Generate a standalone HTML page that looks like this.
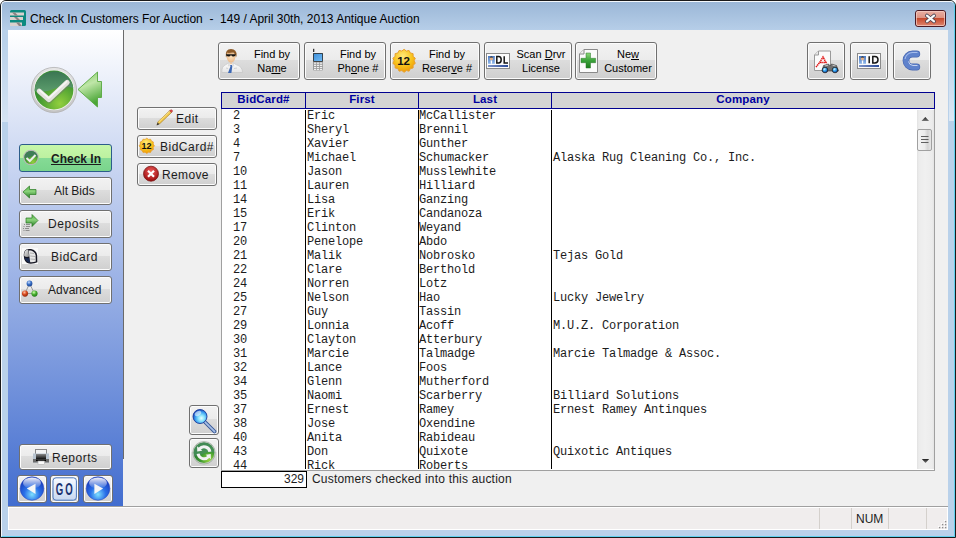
<!DOCTYPE html>
<html><head><meta charset="utf-8">
<style>
*{box-sizing:border-box;margin:0;padding:0}
html,body{width:956px;height:538px;overflow:hidden;background:#fff}
body{position:relative;font-family:"Liberation Sans",sans-serif;color:#000}
.a{position:absolute}
#win{position:absolute;left:0;top:0;width:956px;height:538px;background:#b9d1ea;border:1px solid #1a1a1a;border-radius:6px 6px 0 0}
#win:before{content:"";position:absolute;left:0;top:0;right:0;bottom:0;border:1px solid #f4f8fc;border-right-color:#5fd0ee;border-bottom-color:#5fd0ee;border-radius:5px 5px 0 0}
#titlebg{position:absolute;left:2px;top:2px;width:952px;height:28px;background:linear-gradient(#9bb7d7,#b6cee8);border-radius:4px 4px 0 0}
#title{left:30px;top:11px;font-size:12px;white-space:pre;color:#000;line-height:16px}
#client{left:8px;top:30px;width:940px;height:500px;background:#f0f0f0;overflow:hidden}
#side{left:8px;top:30px;width:115px;height:476px;background:linear-gradient(#ffffff,#426dcf)}
#sep{left:123px;top:30px;width:1px;height:429px;background:#6a6a6a}
#status{left:8px;top:506px;width:940px;height:24px;background:#f0eded;border-top:1px solid #a0a0a0}
#status:after{content:"";position:absolute;left:0;top:0;right:0;bottom:0;border-top:1px solid #fff;border-bottom:1px solid #fff;border-left:1px solid #fff;border-right:1px solid #fff}
.sbsep{top:508px;width:1px;height:21px;background:#d4d0cc}
.btn{position:absolute;border:1px solid #707070;border-radius:3px;background:linear-gradient(#f2f2f2 0%,#ebebeb 47%,#dddddd 47%,#cfcfcf 100%);box-shadow:inset 0 0 0 1px #fcfcfc}
.bt{position:absolute;font-size:11px;line-height:13px;text-align:center;white-space:pre;color:#000}
.st{position:absolute;font-size:12px;line-height:14px;white-space:pre;color:#1c1c1c}
#grid{left:221px;top:92px;width:714px;height:379px;background:#fff;border:1px solid #a0a0a0;border-top:0}
#ghead{left:221px;top:92px;width:714px;height:17px;background:#d4d4d4;border:1px solid #000090}
.gh{position:absolute;top:0;height:15px;font-size:11.5px;letter-spacing:0.15px;font-weight:bold;color:#0000a0;text-align:center;line-height:15px}
.gv{position:absolute;width:1px;background:#000090}
.gd{position:absolute;width:1px;background:#000}
.gc{position:absolute;top:0;font-family:"Liberation Mono",monospace;font-size:12.0px;letter-spacing:-0.2px;line-height:14px;white-space:pre;color:#1c1c1c}
.row{position:absolute;left:0;height:14px;font-family:"Liberation Mono",monospace;font-size:11.667px;line-height:14px;white-space:pre;color:#1c1c1c}
</style></head><body>
<div id="win"></div>
<div id="titlebg"></div>
<div class="a" id="title">Check In Customers For Auction  -  149 / April 30th, 2013 Antique Auction</div>
<div class="a" id="client"></div>
<div class="a" style="left:949px;top:40px;width:5px;height:81px;background:linear-gradient(rgba(255,255,255,0),rgba(255,255,255,0.5))"></div>
<div class="a" style="left:2px;top:40px;width:6px;height:82px;background:linear-gradient(rgba(255,255,255,0),rgba(255,255,255,0.4))"></div>
<div class="a" id="side"></div>
<div class="a" id="sep"></div>
<div class="a" id="status"></div>
<div class="a sbsep" style="left:819px"></div>
<div class="a sbsep" style="left:851px"></div>
<div class="a sbsep" style="left:888px"></div>
<div class="a sbsep" style="left:926px"></div>
<div class="st" style="left:856px;top:512px">NUM</div>
<svg class="a" style="left:936px;top:518px" width="12" height="12" viewBox="936 518 12 12"><g fill="#fff"><rect x="944" y="520" width="1" height="1"/><rect x="941" y="523" width="1" height="1"/><rect x="944" y="523" width="1" height="1"/><rect x="938" y="526" width="1" height="1"/><rect x="941" y="526" width="1" height="1"/><rect x="944" y="526" width="1" height="1"/></g><g fill="#8e8e8e"><rect x="945" y="521" width="1.3" height="1.3"/><rect x="942" y="524" width="1.3" height="1.3"/><rect x="945" y="524" width="1.3" height="1.3"/><rect x="939" y="527" width="1.3" height="1.3"/><rect x="942" y="527" width="1.3" height="1.3"/><rect x="945" y="527" width="1.3" height="1.3"/></g></svg>

<!-- toolbar -->
<div class="btn" style="left:218px;top:42px;width:82px;height:38px"></div>
<div class="btn" style="left:304px;top:42px;width:82px;height:38px"></div>
<div class="btn" style="left:390px;top:42px;width:90px;height:38px"></div>
<div class="btn" style="left:484px;top:42px;width:88px;height:38px"></div>
<div class="btn" style="left:575px;top:42px;width:82px;height:38px"></div>
<div class="btn" style="left:807px;top:42px;width:38px;height:38px"></div>
<div class="btn" style="left:850px;top:42px;width:38px;height:38px"></div>
<div class="btn" style="left:893px;top:42px;width:38px;height:38px"></div>

<!-- toolbar text -->
<div class="bt" style="left:246px;top:48px;width:52px">Find by</div>
<div class="bt" style="left:246px;top:62px;width:52px">Na<u>m</u>e</div>
<div class="bt" style="left:332px;top:48px;width:52px">Find by</div>
<div class="bt" style="left:332px;top:62px;width:52px">Ph<u>o</u>ne #</div>
<div class="bt" style="left:417px;top:48px;width:60px">Find by</div>
<div class="bt" style="left:417px;top:62px;width:60px">Reser<u>v</u>e #</div>
<div class="bt" style="left:511px;top:48px;width:60px">Scan <u>D</u>rvr</div>
<div class="bt" style="left:511px;top:62px;width:60px">License</div>
<div class="bt" style="left:598px;top:48px;width:60px">Ne<u>w</u></div>
<div class="bt" style="left:598px;top:62px;width:60px">Customer</div>
<!-- left action buttons -->
<div class="btn" style="left:137px;top:107px;width:80px;height:23px"></div>
<div class="btn" style="left:137px;top:135px;width:80px;height:23px"></div>
<div class="btn" style="left:137px;top:163px;width:80px;height:23px"></div>
<div class="st" style="left:176px;top:112px;letter-spacing:0.5px">Edit</div>
<div class="st" style="left:160px;top:140px;letter-spacing:0.5px">BidCard#</div>
<div class="st" style="left:162px;top:168px;letter-spacing:0.35px">Remove</div>

<div class="btn" style="left:189px;top:405px;width:30px;height:30px"></div>
<div class="btn" style="left:189px;top:438px;width:30px;height:30px"></div>

<!-- sidebar buttons -->
<div class="a" style="left:19px;top:144px;width:93px;height:28px;border:1px solid #2c5d8a;border-radius:3px;background:linear-gradient(#c6f7aa 0%,#bdf1a0 50%,#85db95 50%,#7ad48c 100%)"></div>
<div class="btn" style="left:19px;top:177px;width:93px;height:28px"></div>
<div class="btn" style="left:19px;top:210px;width:93px;height:28px"></div>
<div class="btn" style="left:19px;top:243px;width:93px;height:28px"></div>
<div class="btn" style="left:19px;top:276px;width:93px;height:28px"></div>
<div class="btn" style="left:19px;top:444px;width:93px;height:26px"></div>
<div class="btn" style="left:17px;top:475px;width:30px;height:28px"></div>
<div class="btn" style="left:50px;top:475px;width:29px;height:28px"></div>
<div class="btn" style="left:83px;top:475px;width:30px;height:28px"></div>

<div class="st" style="left:51px;top:152px;font-weight:bold;text-decoration:underline">Check In</div>
<div class="st" style="left:54px;top:184px">Alt Bids</div>
<div class="st" style="left:48px;top:217px;letter-spacing:0.6px">Deposits</div>
<div class="st" style="left:51px;top:250px;letter-spacing:0.5px">BidCard</div>
<div class="st" style="left:48px;top:283px">Advanced</div>
<div class="st" style="left:52px;top:451px;letter-spacing:0.5px">Reports</div>

<!-- grid -->
<div class="a" id="grid"></div>
<div class="a" id="ghead"></div>
<div class="a" id="gbody" style="left:222px;top:109px;width:695px;height:360px;overflow:hidden">
<div class="gc" style="left:11px">2
3
4
7
10
11
14
15
17
20
21
22
24
25
27
29
30
31
32
34
35
37
38
40
43
44</div>
<div class="gc" style="left:85px">Eric
Sheryl
Xavier
Michael
Jason
Lauren
Lisa
Erik
Clinton
Penelope
Malik
Clare
Norren
Nelson
Guy
Lonnia
Clayton
Marcie
Lance
Glenn
Naomi
Ernest
Jose
Anita
Don
Rick</div>
<div class="gc" style="left:197px">McCallister
Brennil
Gunther
Schumacker
Musslewhite
Hilliard
Ganzing
Candanoza
Weyand
Abdo
Nobrosko
Berthold
Lotz
Hao
Tassin
Acoff
Atterbury
Talmadge
Foos
Mutherford
Scarberry
Ramey
Oxendine
Rabideau
Quixote
Roberts</div>
<div class="gc" style="left:331px">


Alaska Rug Cleaning Co., Inc.






Tejas Gold


Lucky Jewelry

M.U.Z. Corporation

Marcie Talmadge &amp; Assoc.


Billiard Solutions
Ernest Ramey Antinques


Quixotic Antiques
</div>

</div>
<div class="gd" style="left:305px;top:110px;height:359px"></div>
<div class="gd" style="left:418px;top:110px;height:359px"></div>
<div class="gd" style="left:551px;top:110px;height:359px"></div>
<div class="gv" style="left:305px;top:92px;height:17px"></div>
<div class="gv" style="left:418px;top:92px;height:17px"></div>
<div class="gv" style="left:551px;top:92px;height:17px"></div>
<div class="gh" style="left:222px;top:92px;width:83px">BidCard#</div>
<div class="gh" style="left:306px;top:92px;width:112px">First</div>
<div class="gh" style="left:419px;top:92px;width:132px">Last</div>
<div class="gh" style="left:552px;top:92px;width:382px">Company</div>
<!-- scrollbar -->
<div class="a" id="sb" style="left:917px;top:110px;width:17px;height:359px;background:linear-gradient(90deg,#e2e2e2 0px,#ececec 2px,#f0f0f0 8px,#ececec 15px,#e4e4e4 17px)"></div>
<div class="a" style="left:917px;top:129px;width:15px;height:22px;border:1px solid #a0a0a0;border-radius:2px;background:linear-gradient(90deg,#f4f4f4,#ececec 50%,#d4d4d4 75%,#e6e6e6)"></div>
<svg class="a" style="left:917px;top:110px" width="17" height="359" viewBox="0 0 17 359">
<defs><linearGradient id="gArr" x1="0" y1="0" x2="0" y2="1"><stop offset="0" stop-color="#202020"/><stop offset="1" stop-color="#7a7a7a"/></linearGradient></defs>
<path d="M4.5,11 L8.3,7 L12.1,11 Z" fill="url(#gArr)"/>
<path d="M4.8,349 L12.2,349 L8.5,353 Z" fill="url(#gArr)"/>
<path d="M4,26.5h7.5M4,29.5h7.5M4,32.5h7.5" stroke="#606060" stroke-width="1.2"/>
</svg>

<!-- count -->
<div class="a" style="left:221px;top:471px;width:86px;height:17px;border:1px solid #000;background:#fff"></div>
<div class="st" style="left:226px;top:472px;width:78px;text-align:right">329</div>
<div class="st" style="left:312px;top:472px;letter-spacing:0.2px">Customers checked into this auction</div>
<!-- ICONS -->
<svg class="a" style="left:0;top:0" width="956" height="538" viewBox="0 0 956 538">
<defs>
<linearGradient id="gGreen" x1="0" y1="0" x2="0" y2="1"><stop offset="0" stop-color="#3f7a57"/><stop offset="0.45" stop-color="#4f9060"/><stop offset="0.5" stop-color="#3d9a35"/><stop offset="1" stop-color="#8ccc40"/></linearGradient>
<radialGradient id="gGreen2" cx="0.65" cy="0.85" r="0.6"><stop offset="0" stop-color="#92cf3e"/><stop offset="1" stop-color="#3a932f"/></radialGradient>
<linearGradient id="gRing" x1="0" y1="0" x2="0" y2="1"><stop offset="0" stop-color="#e6e6e6"/><stop offset="1" stop-color="#c4c4c4"/></linearGradient>
<linearGradient id="gArrow" x1="0" y1="0" x2="0" y2="1"><stop offset="0" stop-color="#8fd070"/><stop offset="0.5" stop-color="#b8e2a0"/><stop offset="1" stop-color="#4ea83a"/></linearGradient>
<linearGradient id="gArrow2" x1="0" y1="0" x2="0" y2="1"><stop offset="0" stop-color="#5ab84a"/><stop offset="0.45" stop-color="#8ad27a"/><stop offset="1" stop-color="#227a22"/></linearGradient>
<radialGradient id="gBadge" cx="0.45" cy="0.3" r="0.7"><stop offset="0" stop-color="#ffe97a"/><stop offset="0.6" stop-color="#f7c21a"/><stop offset="1" stop-color="#ee9a08"/></radialGradient>
<linearGradient id="gBlueScr" x1="0" y1="0" x2="1" y2="1"><stop offset="0" stop-color="#3f8fd8"/><stop offset="1" stop-color="#6fbaf5"/></linearGradient>
<linearGradient id="gPlus" x1="0" y1="0" x2="0" y2="1"><stop offset="0" stop-color="#8fd87a"/><stop offset="0.5" stop-color="#3aa33a"/><stop offset="1" stop-color="#1d7a1d"/></linearGradient>
<linearGradient id="gC" x1="0" y1="0" x2="0" y2="1"><stop offset="0" stop-color="#7f9fdc"/><stop offset="1" stop-color="#4a6dbd"/></linearGradient>
<linearGradient id="gBar" x1="0" y1="0" x2="1" y2="0"><stop offset="0" stop-color="#7f95c8"/><stop offset="1" stop-color="#2a4a9a"/></linearGradient>
<linearGradient id="gPhoto" x1="0" y1="0" x2="0" y2="1"><stop offset="0" stop-color="#4a78c0"/><stop offset="1" stop-color="#8fb8ec"/></linearGradient>
<radialGradient id="gLens" cx="0.4" cy="0.35" r="0.6"><stop offset="0" stop-color="#d8f4ff"/><stop offset="0.5" stop-color="#38a8f0"/><stop offset="1" stop-color="#1050b0"/></radialGradient>
<radialGradient id="gRed" cx="0.5" cy="0.35" r="0.6"><stop offset="0" stop-color="#f06060"/><stop offset="1" stop-color="#a01010"/></radialGradient>
<radialGradient id="gNav" cx="0.5" cy="0.75" r="0.65"><stop offset="0" stop-color="#7fe0ff"/><stop offset="0.5" stop-color="#2a70e8"/><stop offset="1" stop-color="#1a3fc0"/></radialGradient>
<linearGradient id="gNavTop" x1="0" y1="0" x2="0" y2="1"><stop offset="0" stop-color="#ffffff" stop-opacity="0.95"/><stop offset="1" stop-color="#ffffff" stop-opacity="0.05"/></linearGradient>
<radialGradient id="gRef" cx="0.6" cy="0.8" r="0.7"><stop offset="0" stop-color="#8ccf3a"/><stop offset="0.6" stop-color="#4a9a3a"/><stop offset="1" stop-color="#2f7a3a"/></radialGradient>
<linearGradient id="gPrn" x1="0" y1="0" x2="0" y2="1"><stop offset="0" stop-color="#8a8a8a"/><stop offset="1" stop-color="#101010"/></linearGradient>
</defs>

<!-- app icon -->
<g>
<rect x="10" y="10" width="16" height="16" rx="1.5" fill="#0c8a80"/>
<rect x="10" y="12.5" width="14" height="3" fill="#d9d2ce"/>
<polygon points="12,12.5 15,12.5 18,15.5 15,15.5" fill="#8a8282"/>
<rect x="10" y="17" width="13" height="3" fill="#d9d2ce"/>
<polygon points="14,17 17,17 20,20 17,20" fill="#8a8282"/>
<rect x="10" y="22.5" width="12" height="3.5" fill="#d9d2ce"/>
<polygon points="16,22.5 19,22.5 22,26 19,26" fill="#8a8282"/>
</g>

<!-- close button -->
<g>
<defs><linearGradient id="gClose" x1="0" y1="0" x2="0" y2="1"><stop offset="0" stop-color="#eab0a4"/><stop offset="0.45" stop-color="#de9484"/><stop offset="0.5" stop-color="#c64a2e"/><stop offset="1" stop-color="#e08a74"/></linearGradient></defs>
<rect x="915.5" y="10.5" width="30" height="16" rx="2.5" fill="url(#gClose)" stroke="#4a1a24"/>
<rect x="916.5" y="11.5" width="28" height="14" rx="1.5" fill="none" stroke="#f6d0c8" stroke-opacity="0.7"/>
<path d="M927,15.6 L934,21.4 M934,15.6 L927,21.4" stroke="#3a3848" stroke-width="3.8" stroke-linecap="round"/>
<path d="M927,15.6 L934,21.4 M934,15.6 L927,21.4" stroke="#f8f8f8" stroke-width="2.3" stroke-linecap="round"/>
</g>

<!-- big check -->
<g>
<defs>
<linearGradient id="gTopG" x1="0" y1="0" x2="0" y2="1"><stop offset="0" stop-color="#3a7652"/><stop offset="1" stop-color="#5c9c6c"/></linearGradient>
<linearGradient id="gArrowB" x1="0" y1="0" x2="0.3" y2="1"><stop offset="0" stop-color="#7cc860"/><stop offset="0.45" stop-color="#bfe6a8"/><stop offset="1" stop-color="#4aa636"/></linearGradient>
</defs>
<circle cx="54" cy="90" r="22.6" fill="url(#gRing)" stroke="#b0b0b0" stroke-width="0.8"/>
<circle cx="54" cy="90" r="20.3" fill="#f2f2f2"/>
<circle cx="54" cy="90" r="19.4" fill="url(#gGreen2)"/>
<path d="M34.7,91 A19.4,19.4 0 0 1 73.3,88 Q64,84.5 55,88.5 Q44,93.5 34.7,91 Z" fill="url(#gTopG)"/>
<path d="M40,92.6 L49.2,100.6 L67.8,83.6" fill="none" stroke="#6a7a6a" stroke-width="5.6" stroke-linejoin="round" stroke-linecap="round" opacity="0.45"/>
<path d="M39.2,91.2 L48.8,99.6 L67.2,82.4" fill="none" stroke="#e4e2de" stroke-width="5" stroke-linejoin="round" stroke-linecap="round"/>
<path d="M39.6,90.2 L48.8,98.2 L66.6,81.6" fill="none" stroke="#f8f8f6" stroke-width="1.6" stroke-linejoin="round" stroke-linecap="round" opacity="0.9"/>
</g>
<!-- big arrow -->
<path d="M78,89.5 L97.5,72 L97.5,81.5 L101.5,81.5 L101.5,97.5 L97.5,97.5 L97.5,107 Z" fill="url(#gArrowB)" stroke="#58a840" stroke-width="0.9"/>

<!-- sidebar small icons -->
<g>
<circle cx="31" cy="157.5" r="7.8" fill="#b8b8b8"/>
<circle cx="31" cy="157.5" r="6.6" fill="url(#gGreen2)"/>
<path d="M24.4,157.5 A6.6,6.6 0 0 1 37.6,157.5 Q33,155 30,157 Q27,158.5 24.4,157.5Z" fill="#3f7d58"/>
<path d="M26.5,158 L29.8,161 L35.5,155" fill="none" stroke="#eeeeee" stroke-width="2"/>
</g>
<path d="M23,192 L29.5,186 L29.5,189.5 L36,189.5 L36,194.5 L29.5,194.5 L29.5,198 Z" fill="url(#gArrow2)" stroke="#2a7a22" stroke-width="0.7"/>
<g>
<path d="M26,218 L32,218 L32,214.5 L38,220.5 L32,226.5 L32,223 L26,223 Z" fill="url(#gArrow2)" stroke="#2a7a22" stroke-width="0.7"/>
<g stroke="#7a7a7a" stroke-width="0.8"><path d="M24,224.5h1M26,224.5h4M23.5,226.5h1M26,226.5h4M23,228.5h1M25,228.5h4M23.5,230.5h1M25.5,230.5h4"/></g>
</g>
<g>
<defs><linearGradient id="gSilv" x1="0" y1="0" x2="1" y2="1"><stop offset="0" stop-color="#f4f4f4"/><stop offset="1" stop-color="#8a8a8a"/></linearGradient></defs>
<rect x="22" y="248" width="16" height="16" fill="#fafafa"/>
<path d="M23.8,256 Q23.2,249.5 28.5,249 L31,249 Q36.5,250 37.2,255.5 L37.4,262.2 Q34,264 29,263.6 Q24,262.5 23.8,256Z" fill="#161622"/>
<path d="M24.2,256 Q23.8,250 28.2,249.6 L29.2,256.5 Q26.5,257.5 24.2,256 Z" fill="url(#gSilv)"/>
<path d="M24.6,257.5 Q26,258.5 29.5,258 L30,262.8 Q26,262.5 24.6,257.5Z" fill="#1a2a50"/>
<path d="M28.8,250.6 L31,250.6 Q34.8,251.6 35.6,255.2 L35.8,261.6 Q33,262.6 30.2,262.2 L29.4,256.6 Z" fill="#e6e6e6"/>
<path d="M30,253 L34,253.5 M30.2,256 L35,256.5 M30.4,259 L35.2,259.4" stroke="#9a9a9a" stroke-width="0.7"/>
</g>
<g>
<path d="M29.5,283.5 L25,293.5 L34.5,293.5 Z" fill="none" stroke="#9a9a9a" stroke-width="1"/>
<defs>
<radialGradient id="bB" cx="0.4" cy="0.3" r="0.7"><stop offset="0" stop-color="#c8dcff"/><stop offset="0.5" stop-color="#3a72c8"/><stop offset="1" stop-color="#1a4290"/></radialGradient>
<radialGradient id="bR" cx="0.4" cy="0.3" r="0.7"><stop offset="0" stop-color="#ffc0a0"/><stop offset="0.5" stop-color="#d84a20"/><stop offset="1" stop-color="#902a10"/></radialGradient>
<radialGradient id="bG" cx="0.4" cy="0.3" r="0.7"><stop offset="0" stop-color="#d0ffb0"/><stop offset="0.5" stop-color="#48b030"/><stop offset="1" stop-color="#247818"/></radialGradient>
</defs>
<circle cx="29.5" cy="283.5" r="2.9" fill="url(#bB)"/>
<circle cx="25" cy="293.6" r="3.1" fill="url(#bR)"/>
<circle cx="34.5" cy="293.6" r="3.1" fill="url(#bG)"/>
</g>
<!-- printer reports -->
<g>
<rect x="35.5" y="449.5" width="11" height="5" fill="#f4f4f4" stroke="#8a8a8a"/>
<rect x="33" y="453.5" width="16" height="9" fill="#b8c4d0"/>
<rect x="36" y="454" width="10" height="5" fill="url(#gPrn)"/>
<rect x="33" y="459" width="16" height="3.5" fill="#6a6a6a"/>
<rect x="36" y="459.5" width="10" height="1.5" fill="#000"/>
<rect x="38" y="461" width="6.5" height="3.5" fill="#fafafa" stroke="#b0b0b0" stroke-width="0.6"/>
</g>

<!-- nav -->
<g>
<circle cx="32" cy="488.5" r="11.8" fill="url(#gNav)" stroke="#2a4ac0" stroke-width="0.6"/>
<ellipse cx="32" cy="483" rx="9" ry="5.5" fill="url(#gNavTop)"/>
<path d="M26.8,488.5 L35.5,483.7 L35.5,494 Z" fill="#f6f6f6"/>
<circle cx="98" cy="488.5" r="11.8" fill="url(#gNav)" stroke="#2a4ac0" stroke-width="0.6"/>
<ellipse cx="98" cy="483" rx="9" ry="5.5" fill="url(#gNavTop)"/>
<path d="M103.1,488.5 L94.4,483.7 L94.4,494 Z" fill="#f6f6f6"/>
<defs><linearGradient id="gGo" x1="0" y1="0" x2="0" y2="1"><stop offset="0" stop-color="#f8fbff"/><stop offset="1" stop-color="#c8d8f0"/></linearGradient></defs>
<rect x="53" y="477.8" width="23.4" height="22.4" rx="3" fill="url(#gGo)" stroke="#4a78c0" stroke-width="1"/>
<text x="0" y="0" text-anchor="middle" font-family="Liberation Sans" font-weight="bold" font-size="16" fill="#1a3270" transform="translate(65.2 494.6) scale(0.6 1.08)" letter-spacing="3.5">GO</text>
</g>

<!-- toolbar icons -->
<!-- person -->
<g>
<defs><linearGradient id="gShirt" x1="0" y1="0" x2="0" y2="1"><stop offset="0" stop-color="#ffffff"/><stop offset="1" stop-color="#e4e4e4"/></linearGradient>
<radialGradient id="gFace" cx="0.5" cy="0.4" r="0.6"><stop offset="0" stop-color="#fde3c0"/><stop offset="1" stop-color="#eab888"/></radialGradient></defs>
<path d="M221.8,72.5 Q221.5,66.5 225.5,64.8 L229.5,62.6 L232.5,62.6 L236.5,64.8 Q242.5,66.5 242.6,72.5 Z" fill="url(#gShirt)" stroke="#c4c4c4" stroke-width="0.7"/>
<path d="M226,68 L228,68.5 M234,68.5 L237,68" stroke="#c8c8c8" stroke-width="0.8"/>
<path d="M229.2,62.8 L231,64.6 L232.8,62.8 Z" fill="#eec49a"/>
<path d="M229,62.8 L230.2,65.6 L228.2,66 Z M233,62.8 L231.8,65.6 L233.8,66 Z" fill="#f4f4f4" stroke="#c8c8c8" stroke-width="0.5"/>
<path d="M230.2,65 L231.8,65 L232.3,66.5 L231.4,73 L228,73 L230.4,66.5 Z" fill="#3d68b4"/>
<path d="M226.4,53 Q226.2,62.5 231,62.6 Q235.8,62.5 235.8,53 Z" fill="url(#gFace)"/>
<path d="M225.8,56.5 Q225,49.2 231,49 Q236.8,49 236.6,55.5 L236,57.6 Q235.4,53.6 233.2,52.6 Q230,53.4 227,52.8 Q226.4,54.5 226.4,57.5 Z" fill="#8c5a28"/>
<path d="M227,52.8 Q230,53.4 233.2,52.6" stroke="#b07a40" stroke-width="0.6" fill="none"/>
<path d="M226,54.2 H235.6 V55 Q235.4,56.4 233.6,56.4 Q231.6,56.4 231.2,55.2 L230.8,55.2 Q230.4,56.4 228.4,56.4 Q226.2,56.4 226,55 Z" fill="#141414"/>
</g>
<!-- phone -->
<g>
<rect x="313" y="48.8" width="1.3" height="3.2" fill="#333"/>
<rect x="313" y="53" width="10" height="17.5" rx="1" fill="#9a9a9a"/>
<rect x="313" y="53" width="10" height="8.8" rx="1" fill="#2a2a2a"/>
<rect x="313.8" y="53.8" width="8.4" height="7.2" fill="url(#gBlueScr)"/>
<g fill="#f0f0f0"><rect x="314" y="62.5" width="2.2" height="1.3"/><rect x="317" y="62.5" width="2.2" height="1.3"/><rect x="320" y="62.5" width="2.2" height="1.3"/>
<rect x="314" y="64.7" width="2.2" height="1.3"/><rect x="317" y="64.7" width="2.2" height="1.3"/><rect x="320" y="64.7" width="2.2" height="1.3"/>
<rect x="314" y="66.9" width="2.2" height="1.3"/><rect x="317" y="66.9" width="2.2" height="1.3"/><rect x="320" y="66.9" width="2.2" height="1.3"/>
<rect x="314" y="69" width="2.2" height="1.1"/><rect x="317" y="69" width="2.2" height="1.1"/><rect x="320" y="69" width="2.2" height="1.1"/></g>
</g>
<!-- badge 12 -->
<g id="badge">
<path d="M404.10,49.30 L406.33,51.05 L409.09,50.44 L410.33,52.98 L413.09,53.63 L413.11,56.46 L415.31,58.24 L414.10,60.80 L415.31,63.36 L413.11,65.14 L413.09,67.97 L410.33,68.62 L409.09,71.16 L406.33,70.55 L404.10,72.30 L401.87,70.55 L399.11,71.16 L397.87,68.62 L395.11,67.97 L395.09,65.14 L392.89,63.36 L394.10,60.80 L392.89,58.24 L395.09,56.46 L395.11,53.63 L397.87,52.98 L399.11,50.44 L401.87,51.05Z" fill="url(#gBadge)" stroke="#e8a030" stroke-width="1"/>
<text x="403.6" y="65" text-anchor="middle" font-family="Liberation Sans" font-weight="bold" font-size="11.5" fill="#111">12</text>
</g>
<!-- DL card -->
<g>
<rect x="486.5" y="53.5" width="23" height="15" fill="#fbfbfb" stroke="#8a8a8a"/>
<rect x="488" y="56" width="6.8" height="7.8" fill="url(#gPhoto)"/>
<circle cx="491.4" cy="58.8" r="1.8" fill="#e0b08a"/>
<path d="M489.7,57.6 Q491.4,55.4 493.1,57.6 Z" fill="#111"/>
<path d="M490.6,60.5 L492.2,60.5 L492,63.8 L490.8,63.8Z" fill="#fff"/>
<path d="M496.8,56.6 V63 H498.6 Q501.2,63 501.2,59.8 Q501.2,56.6 498.6,56.6 Z" fill="none" stroke="#151515" stroke-width="1.5"/><path d="M504.2,56.3 V63 H508" fill="none" stroke="#151515" stroke-width="1.5"/>
<rect x="488" y="65" width="20" height="2" fill="url(#gBar)"/>
</g>
<!-- new doc -->
<g>
<path d="M579.5,54 L584,49.5 L597.5,49.5 L597.5,72.5 L579.5,72.5 Z" fill="#fbfbfb" stroke="#8a8a8a"/>
<path d="M579.5,54 L584,54 L584,49.5" fill="#f0f0f0" stroke="#8a8a8a"/>
<path d="M586,53 L590.5,53 L590.5,58.3 L595.6,58.3 L595.6,62.7 L590.5,62.7 L590.5,68 L586,68 L586,62.7 L581,62.7 L581,58.3 L586,58.3 Z" fill="url(#gPlus)" stroke="#2a7a2a" stroke-width="0.5"/>
</g>
<!-- doc binoculars -->
<g>
<path d="M814.5,55 L818.5,51 L830.5,51 L830.5,70.5 L814.5,70.5 Z" fill="#fbfbfb" stroke="#9a9a9a"/>
<path d="M816,67 L820,62 L823,57 L826,62.5 L819.5,62.5" fill="none" stroke="#e01010" stroke-width="1.5" stroke-dasharray="1.4 0.5"/><path d="M814.5,55 L818.5,55 L818.5,51" fill="#e8e8e8" stroke="#9a9a9a"/>
<path d="M822,71 L823.5,65.5 L828.5,64 L830,66 L831.5,64 L836.5,65.5 L838.5,71 Z" fill="#707070" stroke="#3a3a3a" stroke-width="0.6"/><path d="M825,66 L828,65.2 M832.5,65.2 L835.5,66" stroke="#d8d8d8" stroke-width="0.8"/>
<circle cx="825" cy="70" r="2.8" fill="url(#gLens)" stroke="#222" stroke-width="0.8"/>
<circle cx="835" cy="70" r="2.8" fill="url(#gLens)" stroke="#222" stroke-width="0.8"/>
</g>
<!-- ID card -->
<g>
<rect x="857.5" y="53.5" width="23" height="15" fill="#fbfbfb" stroke="#8a8a8a"/>
<rect x="859" y="56" width="7" height="7.8" fill="url(#gPhoto)"/>
<circle cx="862.5" cy="58.8" r="1.8" fill="#e0b08a"/>
<path d="M860.8,57.6 Q862.5,55.4 864.2,57.6 Z" fill="#111"/>
<path d="M861.8,60.5 L863.3,60.5 L863.1,63.8 L862,63.8Z" fill="#fff"/>
<path d="M869.2,56.3 V63.3" stroke="#151515" stroke-width="1.5"/><path d="M872.8,56.6 V63 H874.8 Q878,63 878,59.8 Q878,56.6 874.8,56.6 Z" fill="none" stroke="#151515" stroke-width="1.5"/>
<rect x="859" y="65" width="20" height="2" fill="url(#gBar)"/>
</g>
<!-- C -->
<path d="M916.8,54 L912.5,54 A6.5,6.5 0 0 0 912.5,67 L916.8,67" fill="none" stroke="#4a68b0" stroke-width="6.8" stroke-linecap="round"/>
<path d="M916.8,54 L912.5,54 A6.5,6.5 0 0 0 912.5,67 L916.8,67" fill="none" stroke="#5f82cc" stroke-width="5.6" stroke-linecap="round"/>
<path d="M917.5,52.5 L912.5,52.5 A8,8 0 0 0 905,59" fill="none" stroke="#b8ccf4" stroke-width="1.1" opacity="0.8"/>
<path d="M917.5,65.5 L913,65.5 A5,5 0 0 1 908.5,61.5" fill="none" stroke="#dde6f8" stroke-width="1" opacity="0.8"/>
<!-- left small icons -->
<g>
<path d="M157,124.8 L158.2,121.6 L169.6,110.8 L171.4,112.6 L160,123.4 Z" fill="#f4cc50" stroke="#a87a20" stroke-width="0.7"/>
<path d="M158.6,121.8 L169.8,111.2" stroke="#fff2b0" stroke-width="0.7"/>
<path d="M169.6,110.8 L170.4,110 Q171.4,109.4 172.2,110.2 Q173,111 172.2,111.8 L171.4,112.6 Z" fill="#e04848" stroke="#a03030" stroke-width="0.5"/>
<path d="M156.6,125.4 L157.6,122.4 L159.4,124.2 Z" fill="#3a3a3a"/>
</g>
<g id="badge2"><path d="M146.80,138.20 L148.51,139.42 L150.60,139.22 L151.47,141.13 L153.38,142.00 L153.18,144.09 L154.40,145.80 L153.18,147.51 L153.38,149.60 L151.47,150.47 L150.60,152.38 L148.51,152.18 L146.80,153.40 L145.09,152.18 L143.00,152.38 L142.13,150.47 L140.22,149.60 L140.42,147.51 L139.20,145.80 L140.42,144.09 L140.22,142.00 L142.13,141.13 L143.00,139.22 L145.09,139.42Z" fill="url(#gBadge)" stroke="#e8a030" stroke-width="0.8"/><text x="146.6" y="149.3" text-anchor="middle" font-family="Liberation Sans" font-weight="bold" font-size="9" fill="#111">12</text>
</g>
<g>
<circle cx="151" cy="173.7" r="7.5" fill="url(#gRed)" stroke="#7a1a1a" stroke-width="0.8"/>
<path d="M148,170.7 L154,176.7 M154,170.7 L148,176.7" stroke="#fff" stroke-width="2.2"/>
</g>
<!-- magnifier -->
<g>
<path d="M205,422 L214.5,431.5" stroke="#3a5a98" stroke-width="3.8" stroke-linecap="round"/>
<path d="M205,422 L214.5,431.5" stroke="#a8c0e8" stroke-width="1.8" stroke-linecap="round" stroke-dasharray="1.2 0.6"/>
<defs><radialGradient id="gLens2" cx="0.6" cy="0.62" r="0.62"><stop offset="0" stop-color="#e8ffff"/><stop offset="0.35" stop-color="#8ae4fc"/><stop offset="0.7" stop-color="#3a9ef0"/><stop offset="1" stop-color="#1a4cc0"/></radialGradient></defs>
<circle cx="200" cy="416.5" r="7" fill="url(#gLens2)" stroke="#1a3a98" stroke-width="0.9"/>
<ellipse cx="198" cy="413.5" rx="3.5" ry="2.2" fill="#ffffff" opacity="0.55" transform="rotate(-30 198 413.5)"/>
</g>
<!-- refresh -->
<g>
<defs><radialGradient id="gRef2" cx="0.75" cy="0.85" r="0.75"><stop offset="0" stop-color="#98d640"/><stop offset="0.55" stop-color="#3f9a32"/><stop offset="1" stop-color="#2a7a30"/></radialGradient></defs>
<circle cx="204" cy="452.8" r="11.3" fill="#c4ccc4" stroke="#8a9a8a" stroke-width="0.5"/>
<circle cx="204" cy="452.8" r="10.3" fill="url(#gRef2)"/>
<path d="M193.7,452.8 A10.3,10.3 0 0 1 214.3,452.8 Q210,451 204,453.5 Q198,456 194.2,456 Z" fill="#4a9060" opacity="0.75"/>
<path d="M209.91,451.76 A6.0,6.0 0 0 0 199.40,448.94" fill="none" stroke="#f2f2f2" stroke-width="3"/>
<polygon points="197.22,451.55 197.12,446.37 202.33,450.75" fill="#f2f2f2"/>
<path d="M198.09,453.84 A6.0,6.0 0 0 0 208.60,456.66" fill="none" stroke="#f2f2f2" stroke-width="3"/>
<polygon points="210.78,454.05 210.88,459.23 205.67,454.85" fill="#f2f2f2"/>
</g>
</svg>

</body></html>
